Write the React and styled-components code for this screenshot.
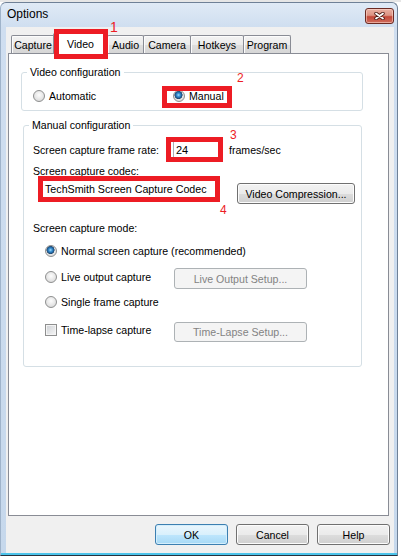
import React from 'react';
import styled, { createGlobalStyle, css } from 'styled-components';

const Global = createGlobalStyle`
  html, body { margin: 0; padding: 0; background: #fff; }
  body { font-family: "Liberation Sans", Arial, sans-serif; font-size: 10.6px; color: #000; }
  * { box-sizing: border-box; }
`;

const Screen = styled.div`
  position: relative;
  width: 401px;
  height: 557px;
  overflow: hidden;
  padding-top: 2px;
  background: linear-gradient(#e6e6e6 0 2px, #ffffff 2px);
`;

const Window = styled.div`
  width: 398px;
  height: 554px;
  border: 1px solid #6f8197;
  border-left-color: #9fb3ca;
  border-bottom-color: #26323f;
  border-radius: 6px 6px 0 0;
  background: linear-gradient(180deg, #e0eaf6 0px, #cfdef0 24px, #c6d8ec 100%);
  box-shadow: inset 0 -2px 0 #4cc3ea;
  display: flex;
  flex-direction: column;
`;

const TitleBar = styled.div`
  flex: none;
  height: 24px;
  display: flex;
  align-items: flex-start;
  justify-content: space-between;
  padding: 0 3px 0 6px;
`;

const Title = styled.div`
  margin-top: 4px;
  font-size: 12px;
  line-height: 14px;
  color: #000;
`;

const CloseButton = styled.div`
  margin-top: 5px;
  width: 29px;
  height: 16px;
  border: 1px solid #6b2a22;
  border-radius: 3px;
  background: linear-gradient(#eab0a2 0%, #dc9383 45%, #c4493a 55%, #cf6c5c 100%);
  box-shadow: inset 0 0 0 1px rgba(255, 220, 210, 0.55);
  display: flex;
  align-items: center;
  justify-content: center;
`;

const Client = styled.div`
  flex: 1;
  margin: 0 3px 2px 5px;
  background: #f0f0f0;
  display: flex;
  flex-direction: column;
  padding: 6px 4px 8px 2px;
`;

const TabRow = styled.div`
  flex: none;
  display: flex;
  align-items: flex-end;
  height: 20px;
  margin-left: 3px;
  position: relative;
  z-index: 1;
`;

const Tab = styled.div`
  flex: none;
  width: ${(p) => p.$w}px;
  height: 18px;
  margin-right: ${(p) => p.$mr}px;
  border: 1px solid #898c95;
  border-bottom: none;
  border-radius: 2px 2px 0 0;
  background: linear-gradient(#f3f3f3, #ebebeb 50%, #dedede 51%, #d6d6d6);
  box-shadow: inset 1px 1px 0 #fcfcfc;
  display: flex;
  align-items: center;
  justify-content: center;
  padding-top: 1px;
  white-space: nowrap;
  ${(p) =>
    p.$active &&
    css`
      height: 21px;
      margin-bottom: -1px;
      padding-top: 0;
      background: #fff;
      box-shadow: none;
      z-index: 2;
    `}
`;

const Panel = styled.div`
  flex: 1;
  margin-right: 1px;
  border: 1px solid #898c95;
  background: #fff;
  display: flex;
  flex-direction: column;
  align-items: flex-start;
`;

const Group = styled.div`
  flex: none;
  display: flex;
  flex-direction: column;
  align-items: flex-start;
  width: ${(p) => p.$w}px;
  margin: ${(p) => p.$mt}px 0 0 ${(p) => p.$ml}px;
  border: 1px solid #d5dfe5;
  border-radius: 3px;
  padding-bottom: ${(p) => p.$pb}px;
`;

const Legend = styled.div`
  margin: -7px 0 0 5px;
  padding: 0 3px;
  height: 13px;
  line-height: 13px;
  background: #fff;
  white-space: nowrap;
`;

const Row = styled.div`
  flex: none;
  display: flex;
  align-items: ${(p) => p.$align || 'center'};
  height: ${(p) => p.$h}px;
  margin: ${(p) => p.$mt || 0}px 0 0 ${(p) => p.$ml || 0}px;
  white-space: nowrap;
`;

const Label = styled.span`
  flex: none;
  width: ${(p) => (p.$w ? `${p.$w}px` : 'auto')};
  margin-left: ${(p) => p.$ml || 0}px;
  line-height: 14px;
`;

const Option = styled.label`
  flex: none;
  display: flex;
  align-items: center;
  gap: 4px;
  width: ${(p) => (p.$w ? `${p.$w}px` : 'auto')};
  height: 22px;
`;

const Radio = styled.span`
  flex: none;
  width: 12px;
  height: 12px;
  border-radius: 50%;
  border: 1px solid #8e8f8f;
  background: radial-gradient(circle at 50% 40%, #fdfdfd 0, #e6e6e6 55%, #cfcfcf 100%);
  ${(p) =>
    p.$checked &&
    css`
      background:
        radial-gradient(circle at 45% 40%, #a7def9 0, #3c94d6 1.6px, #1c5a92 3.2px, #25476a 3.8px, transparent 4.3px),
        radial-gradient(circle at 50% 40%, #fdfdfd 0, #e6e6e6 55%, #cfcfcf 100%);
    `}
`;

const Checkbox = styled.span`
  flex: none;
  width: 12px;
  height: 12px;
  border: 1px solid #8e8f8f;
  background: linear-gradient(135deg, #cdd0d4, #f7f7f7);
  box-shadow: inset 0 0 0 1px #f4f4f4;
`;

const TextBox = styled.div`
  flex: none;
  width: 47px;
  height: 20px;
  border: 1px solid #abadb3;
  border-right-color: #dbdfe6;
  border-bottom-color: #e3e9ef;
  padding-left: 2px;
  line-height: 18px;
  font-size: 11px;
  background: #fff;
`;

const CodecField = styled.div`
  flex: none;
  width: 176px;
  height: 21px;
  margin-left: 7px;
  padding-left: 5px;
  line-height: 21px;
  font-size: 10.7px;
`;

const Button = styled.button`
  flex: none;
  font: inherit;
  color: #000;
  padding: 0;
  display: flex;
  align-items: center;
  justify-content: center;
  width: ${(p) => p.$w}px;
  height: ${(p) => p.$h || 21}px;
  margin-left: ${(p) => p.$ml || 0}px;
  margin-top: ${(p) => p.$mt || 0}px;
  border: 1px solid #707070;
  border-radius: 3px;
  background: linear-gradient(#f2f2f2, #ebebeb 50%, #dddddd 51%, #cfcfcf);
  box-shadow: inset 0 0 0 1px #fcfcfc;
  white-space: nowrap;
  ${(p) =>
    p.$default &&
    css`
      border-color: #3c7fb1;
      background: linear-gradient(#eaf6fd, #d9f0fc 50%, #bee6fd 51%, #a7d9f5);
      box-shadow: inset 0 0 0 1px #d4eefc;
    `}
  ${(p) =>
    p.$disabled &&
    css`
      border-color: #adb2b5;
      background: #f4f4f4;
      box-shadow: none;
      color: #838383;
    `}
`;

const ButtonRow = styled.div`
  flex: none;
  display: flex;
  justify-content: flex-end;
  gap: 8px;
  margin-top: 8px;
`;

const Mark = styled.div`
  position: absolute;
  left: ${(p) => p.$x}px;
  top: ${(p) => p.$y}px;
  width: ${(p) => p.$w}px;
  height: ${(p) => p.$h}px;
  border: 5px solid #ed1c24;
  z-index: 10;
  pointer-events: none;
`;

const MarkNum = styled.span`
  position: absolute;
  left: ${(p) => p.$x}px;
  top: ${(p) => p.$y}px;
  font-size: ${(p) => p.$s || 12}px;
  line-height: 1;
  color: #ed1c24;
  z-index: 10;
`;

const tabs = [
  { t: 'Capture', w: 44, mr: -2 },
  { t: 'Video', w: 55, mr: -1, active: true },
  { t: 'Audio', w: 37, mr: -1 },
  { t: 'Camera', w: 48, mr: -1 },
  { t: 'Hotkeys', w: 54, mr: -1 },
  { t: 'Program', w: 48, mr: 0 },
];

export default function App() {
  return (
    <>
      <Global />
      <Screen>
        <Window>
          <TitleBar>
            <Title>Options</Title>
            <CloseButton>
              <svg width="11" height="8" viewBox="0 0 11 8">
                <path d="M2 1.5 L9 6.5 M9 1.5 L2 6.5" stroke="#4a1a14" strokeWidth="3.4" strokeLinecap="round" />
                <path d="M2 1.5 L9 6.5 M9 1.5 L2 6.5" stroke="#ffffff" strokeWidth="1.8" strokeLinecap="round" />
              </svg>
            </CloseButton>
          </TitleBar>
          <Client>
            <TabRow>
              {tabs.map((tb) => (
                <Tab key={tb.t} $w={tb.w} $mr={tb.mr} $active={tb.active}>
                  {tb.t}
                </Tab>
              ))}
            </TabRow>
            <Panel>
              <Group $w={342} $mt={18} $ml={12} $pb={4}>
                <Legend>Video configuration</Legend>
                <Row $h={20} $mt={7} $ml={11}>
                  <Option $w={140}>
                    <Radio />
                    Automatic
                  </Option>
                  <Option>
                    <Radio $checked />
                    Manual
                  </Option>
                </Row>
              </Group>
              <Group $w={339} $mt={14} $ml={14} $pb={23}>
                <Legend>Manual configuration</Legend>
                <Row $h={22} $mt={7} $ml={9}>
                  <Label $w={140}>Screen capture frame rate:</Label>
                  <TextBox>24</TextBox>
                  <Label $ml={9}>frames/sec</Label>
                </Row>
                <Row $h={14} $mt={3} $ml={9}>
                  <Label>Screen capture codec:</Label>
                </Row>
                <Row $h={25} $mt={1} $ml={9} $align="flex-start">
                  <CodecField>TechSmith Screen Capture Codec</CodecField>
                  <Button $w={118} $ml={21} $mt={4}>
                    Video Compression...
                  </Button>
                </Row>
                <Row $h={14} $mt={17} $ml={9}>
                  <Label>Screen capture mode:</Label>
                </Row>
                <Row $h={22} $mt={5} $ml={21} $align="flex-start">
                  <Option>
                    <Radio $checked />
                    Normal screen capture (recommended)
                  </Option>
                </Row>
                <Row $h={23} $mt={4} $ml={21} $align="flex-start">
                  <Option $w={129}>
                    <Radio />
                    Live output capture
                  </Option>
                  <Button $w={133} $h={21} $mt={2} $disabled>
                    Live Output Setup...
                  </Button>
                </Row>
                <Row $h={22} $mt={2} $ml={21} $align="flex-start">
                  <Option>
                    <Radio />
                    Single frame capture
                  </Option>
                </Row>
                <Row $h={24} $mt={6} $ml={21} $align="flex-start">
                  <Option $w={129}>
                    <Checkbox />
                    Time-lapse capture
                  </Option>
                  <Button $w={133} $h={20} $mt={3} $disabled>
                    Time-Lapse Setup...
                  </Button>
                </Row>
              </Group>
            </Panel>
            <ButtonRow>
              <Button $w={73} $default>OK</Button>
              <Button $w={73}>Cancel</Button>
              <Button $w={73}>Help</Button>
            </ButtonRow>
          </Client>
        </Window>

        <Mark $x={54} $y={29} $w={54} $h={30} />
        <MarkNum $x={110} $y={20} $s={14}>1</MarkNum>
        <Mark $x={162} $y={86} $w={70} $h={22} />
        <MarkNum $x={237} $y={72}>2</MarkNum>
        <Mark $x={166} $y={137} $w={57} $h={25} />
        <MarkNum $x={230} $y={129}>3</MarkNum>
        <Mark $x={38} $y={176} $w={182} $h={26} />
        <MarkNum $x={220} $y={204}>4</MarkNum>
      </Screen>
    </>
  );
}
